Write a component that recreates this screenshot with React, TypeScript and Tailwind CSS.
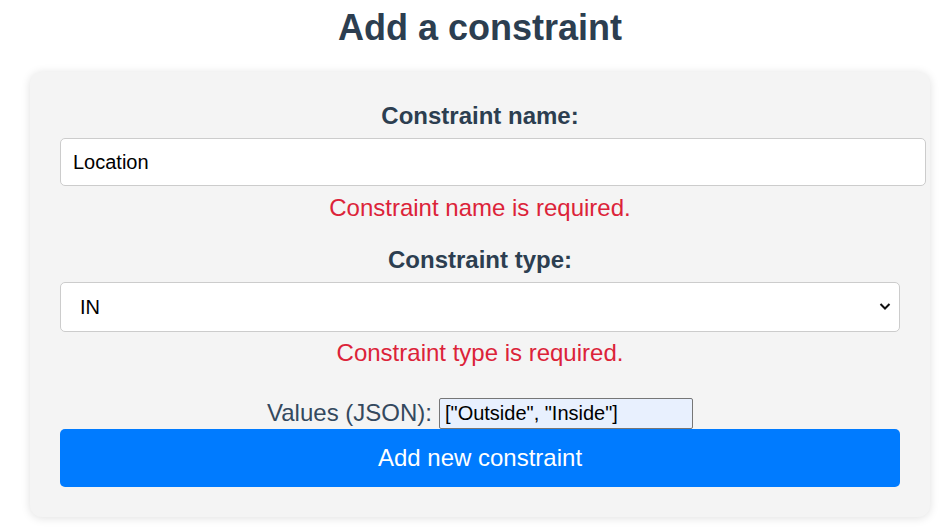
import React from "react";

export default function App() {
  return (
    <div className="min-h-screen bg-white font-['Liberation_Sans',Arial,sans-serif] text-[#2c3e50]">
      <div className="ml-[30px] w-[900px]">
        <h1 className="pt-[8px] text-center text-[36px] font-bold leading-[40px]">
          Add a constraint
        </h1>
        <form className="mt-[24px] flex flex-col rounded-[12px] bg-[#f4f4f4] px-[30px] pt-[30px] pb-[30px] shadow-[0_1px_10px_rgba(0,0,0,0.13)]">
          <label className="text-center text-[24px] font-bold leading-[28px]">
            Constraint name:
          </label>
          <input
            className="mt-[8px] box-content h-[46px] w-full rounded-[5px] border border-[#ccc] bg-white px-[12px] py-0 text-[20px] text-black outline-none"
            defaultValue="Location"
          />
          <p className="mt-[10px] text-center text-[24px] leading-[24px] text-[#dc2339]">
            Constraint name is required.
          </p>
          <label className="mt-[26px] text-center text-[24px] font-bold leading-[28px]">
            Constraint type:
          </label>
          <div className="relative mt-[8px]">
            <select className="h-[50px] w-full appearance-none rounded-[5px] border border-[#ccc] bg-white pl-[19px] text-[20px] text-black outline-none">
              <option>IN</option>
            </select>
            <svg
              className="pointer-events-none absolute right-[9px] top-[20px]"
              width="12"
              height="9"
              viewBox="0 0 12 9"
              fill="none"
            >
              <path d="M1.5 2l4.5 4.5L10.5 2" stroke="#111" strokeWidth="2" />
            </svg>
          </div>
          <p className="mt-[9px] text-center text-[24px] leading-[24px] text-[#dc2339]">
            Constraint type is required.
          </p>
          <div className="mt-[32px] flex h-[32px] items-center justify-center gap-[7px]">
            <span className="text-[24px] text-[#34495e]">Values (JSON):</span>
            <input
              className="h-[31px] w-[254px] rounded-[2px] border border-[#767676] bg-[#e8f0fe] px-[5px] text-[20px] text-black outline-none"
              defaultValue={'["Outside", "Inside"]'}
            />
          </div>
          <button
            type="button"
            className="h-[58px] w-full rounded-[5px] bg-[#007bff] text-[24px] text-white"
          >
            Add new constraint
          </button>
        </form>
      </div>
    </div>
  );
}
